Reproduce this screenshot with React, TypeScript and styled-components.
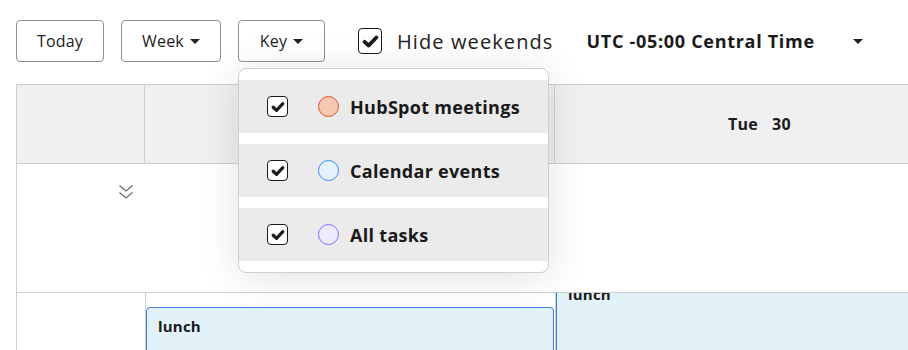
import React from 'react'
import styled, { createGlobalStyle } from 'styled-components'

const GlobalStyle = createGlobalStyle`
  html, body {
    margin: 0;
    padding: 0;
    background: #ffffff;
  }
  body {
    font-family: 'Open Sans', 'Noto Sans', sans-serif;
    color: #1f1f1f;
    overflow: hidden;
  }
`

const Page = styled.div`
  width: 908px;
  height: 350px;
  overflow: hidden;
  padding: 20px 0 0 16px;
  box-sizing: border-box;
`

const Toolbar = styled.div`
  display: flex;
  align-items: center;
  gap: 17px;
  height: 42px;
`

const Button = styled.button<{ $width: number }>`
  width: ${(p) => p.$width}px;
  height: 42px;
  border: 1px solid #8f8f8f;
  border-radius: 4px;
  background: #ffffff;
  font-family: inherit;
  font-size: 16px;
  letter-spacing: 0.2px;
  color: #222;
  display: flex;
  align-items: center;
  justify-content: center;
  gap: 6px;
  padding: 0;
  cursor: pointer;
`

const Caret = styled.span`
  width: 0;
  height: 0;
  border-left: 5px solid transparent;
  border-right: 5px solid transparent;
  border-top: 5px solid #222;
`

const KeyWrap = styled.div`
  position: relative;
  margin-right: 16px;
`

const Dropdown = styled.div`
  position: absolute;
  top: 48px;
  left: 0;
  width: 311px;
  box-sizing: border-box;
  padding: 11px 0;
  background: #ffffff;
  border: 1px solid #cfcfcf;
  border-radius: 8px;
  box-shadow: 0 4px 40px rgba(0, 0, 0, 0.12);
  display: flex;
  flex-direction: column;
  gap: 11px;
  z-index: 10;
`

const KeyRow = styled.div`
  height: 53px;
  background: #ebebeb;
  display: flex;
  align-items: center;
  padding-left: 28px;
`

const Box = styled.span<{ $size: number; $h: number }>`
  width: ${(p) => p.$size}px;
  height: ${(p) => p.$h}px;
  box-sizing: border-box;
  border: 1.5px solid #1a1a1a;
  border-radius: 4px;
  background: #ffffff;
  display: flex;
  align-items: center;
  justify-content: center;
  flex-shrink: 0;
`

const Dot = styled.span<{ $fill: string; $stroke: string }>`
  width: 21px;
  height: 21px;
  box-sizing: border-box;
  border-radius: 50%;
  background: ${(p) => p.$fill};
  border: 1.5px solid ${(p) => p.$stroke};
  margin-left: 30px;
  margin-right: 11px;
`

const KeyLabel = styled.span`
  font-size: 18px;
  font-weight: 700;
  letter-spacing: 0.3px;
  color: #1a1a1a;
`

const HideLabel = styled.label`
  display: flex;
  align-items: center;
  gap: 15px;
  font-size: 20px;
  letter-spacing: 1.1px;
  color: #222;
`

const Zone = styled.div`
  display: flex;
  align-items: center;
  margin-left: 16px;
  gap: 38px;
  font-size: 18px;
  font-weight: 700;
  letter-spacing: 0.7px;
  color: #1a1a1a;
`

const Grid = styled.div`
  margin-top: 22px;
  width: 1400px;
  border-left: 1px solid #cfcfcf;
  border-top: 1px solid #cfcfcf;
`

const HeaderRow = styled.div`
  display: grid;
  grid-template-columns: 128px 410px 410px;
  height: 78px;
  background: #f0f0f0;
  border-bottom: 1px solid #cfcfcf;
`

const HeaderCell = styled.div`
  display: flex;
  align-items: center;
  justify-content: center;
  gap: 14px;
  font-size: 16px;
  font-weight: 700;
  letter-spacing: 0.3px;
  color: #1a1a1a;
  border-right: 1px solid #cfcfcf;
`

const AllDayRow = styled.div`
  height: 128px;
  border-bottom: 1px solid #cfcfcf;
  display: grid;
  grid-template-columns: 128px 1fr;
`

const Expand = styled.div`
  display: flex;
  justify-content: flex-end;
  padding: 20px 11px 0 0;
`

const TimeRow = styled.div`
  display: grid;
  grid-template-columns: 129px 410px 410px;
  height: 80px;
`

const Gutter = styled.div`
  border-right: 1px solid #cfcfcf;
`

const DayColumn = styled.div`
  position: relative;
  overflow: hidden;
  border-right: 1px solid #cfcfcf;
`

const Event = styled.div<{ $top: number }>`
  position: absolute;
  top: ${(p) => p.$top}px;
  left: 0;
  right: 1px;
  height: 140px;
  box-sizing: border-box;
  background: #e3f1f9;
  border: 1px solid #3f7be0;
  border-radius: 4px;
  padding: 8px 11px;
  font-size: 15px;
  font-weight: 700;
  letter-spacing: 0.2px;
  color: #1a1a1a;
`

function Check({ size, h }: { size: number; h?: number }) {
  const w = size - 7
  return (
    <Box $size={size} $h={h ?? size}>
      <svg width={w} height={w} viewBox="0 0 16 16">
        <path
          d="M2.5 8.3 L6.3 11.8 L13.5 4.2"
          fill="none"
          stroke="#1a1a1a"
          strokeWidth="3.6"
          strokeLinecap="round"
          strokeLinejoin="round"
        />
      </svg>
    </Box>
  )
}

const KEY_ITEMS = [
  { label: 'HubSpot meetings', fill: '#f8c7b2', stroke: '#d4552c' },
  { label: 'Calendar events', fill: '#e4f2fb', stroke: '#3a86f4' },
  { label: 'All tasks', fill: '#ecebfd', stroke: '#8a6cf3' },
]

export default function App() {
  return (
    <>
      <GlobalStyle />
      <Page>
        <Toolbar>
          <Button $width={88}>Today</Button>
          <Button $width={100}>
            Week <Caret />
          </Button>
          <KeyWrap>
            <Button $width={87}>
              Key <Caret />
            </Button>
            <Dropdown>
              {KEY_ITEMS.map((item) => (
                <KeyRow key={item.label}>
                  <Check size={21} />
                  <Dot $fill={item.fill} $stroke={item.stroke} />
                  <KeyLabel>{item.label}</KeyLabel>
                </KeyRow>
              ))}
            </Dropdown>
          </KeyWrap>
          <HideLabel>
            <Check size={24} h={26} />
            Hide weekends
          </HideLabel>
          <Zone>
            UTC -05:00 Central Time
            <Caret />
          </Zone>
        </Toolbar>

        <Grid>
          <HeaderRow>
            <HeaderCell />
            <HeaderCell>
              <span>Mon</span>
              <span>29</span>
            </HeaderCell>
            <HeaderCell>
              <span>Tue</span>
              <span>30</span>
            </HeaderCell>
          </HeaderRow>
          <AllDayRow>
            <Expand>
              <svg width="16" height="16" viewBox="0 0 16 16">
                <path
                  d="M1.5 1.5 L8 7 L14.5 1.5 M1.5 8.5 L8 14 L14.5 8.5"
                  fill="none"
                  stroke="#6b6b6b"
                  strokeWidth="1.3"
                />
              </svg>
            </Expand>
            <div />
          </AllDayRow>
          <TimeRow>
            <Gutter />
            <DayColumn>
              <Event $top={14}>lunch</Event>
            </DayColumn>
            <DayColumn>
              <Event $top={-18}>lunch</Event>
            </DayColumn>
          </TimeRow>
        </Grid>
      </Page>
    </>
  )
}
